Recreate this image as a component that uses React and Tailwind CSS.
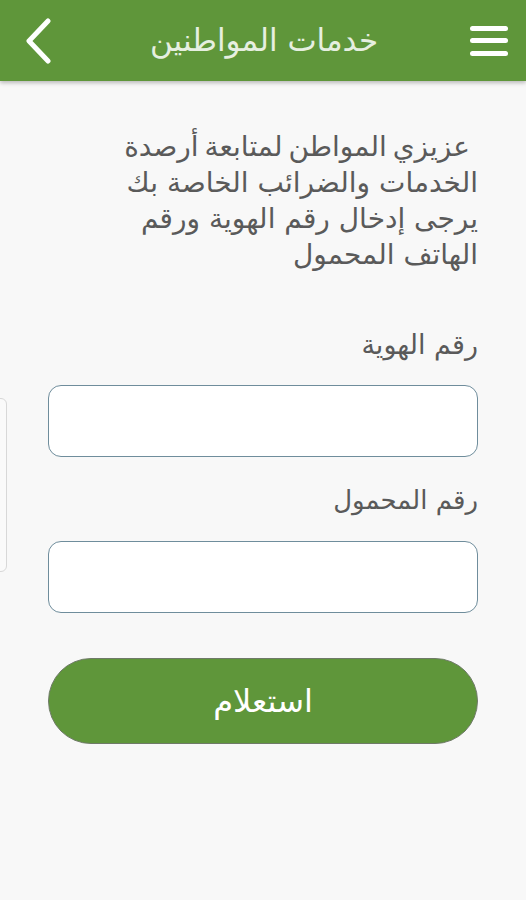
export default function App() {
  return (
    <div dir="rtl" className="relative min-h-[900px] w-[526px] overflow-hidden bg-[#f8f8f8]" style={{ fontFamily: '"DejaVu Sans", "Noto Sans", sans-serif' }}>
      <header className="relative z-10 flex h-[81px] items-center justify-between bg-[#5f963a] px-[18px] shadow-[0_2px_4px_rgba(0,0,0,0.25)]">
        <button className="flex h-[40px] w-[38px] flex-col justify-between py-[5px]">
          <span className="block h-[5px] w-full rounded-sm bg-white" />
          <span className="block h-[5px] w-full rounded-sm bg-white" />
          <span className="block h-[5px] w-full rounded-sm bg-white" />
        </button>
        <h1 className="text-[31px] font-normal text-[#e6efe0]">خدمات المواطنين</h1>
        <button className="flex h-[48px] w-[40px] items-center justify-center">
          <svg width="28" height="46" viewBox="0 0 28 46" fill="none">
            <path d="M24 3 L5 23 L24 43" stroke="white" strokeWidth="5" strokeLinecap="round" strokeLinejoin="round" />
          </svg>
        </button>
      </header>

      <div className="absolute left-[-10px] top-[398px] h-[174px] w-[17px] rounded-md border border-[#d8d8d8] bg-[#fafafa]" />

      <main className="px-[48px] pt-[48px]">
        <p className="whitespace-nowrap text-[28px] leading-[36px] text-[#5a5a5a]">
          <span className="block pr-[8px] [word-spacing:-3px]">عزيزي المواطن لمتابعة أرصدة</span>
          <span className="block">الخدمات والضرائب الخاصة بك</span>
          <span className="block">يرجى إدخال رقم الهوية ورقم</span>
          <span className="block">الهاتف المحمول</span>
        </p>

        <label className="mt-[56px] block text-[27px] leading-[32px] text-[#5a5a5a]">رقم الهوية</label>
        <input className="mt-[24px] block h-[72px] w-full rounded-[13px] border-[1.5px] border-[#6f8d9c] bg-white outline-none" />

        <label className="mt-[27px] block text-[26px] leading-[32px] text-[#5a5a5a]">رقم المحمول</label>
        <input className="mt-[25px] block h-[72px] w-full rounded-[13px] border-[1.5px] border-[#6f8d9c] bg-white outline-none" />

        <button className="mt-[45px] flex h-[86px] w-full items-center justify-center rounded-full border-[1.5px] border-[#6f7a68] bg-[#5f963a] text-[32px] text-white">
          استعلام
        </button>
      </main>
    </div>
  );
}
